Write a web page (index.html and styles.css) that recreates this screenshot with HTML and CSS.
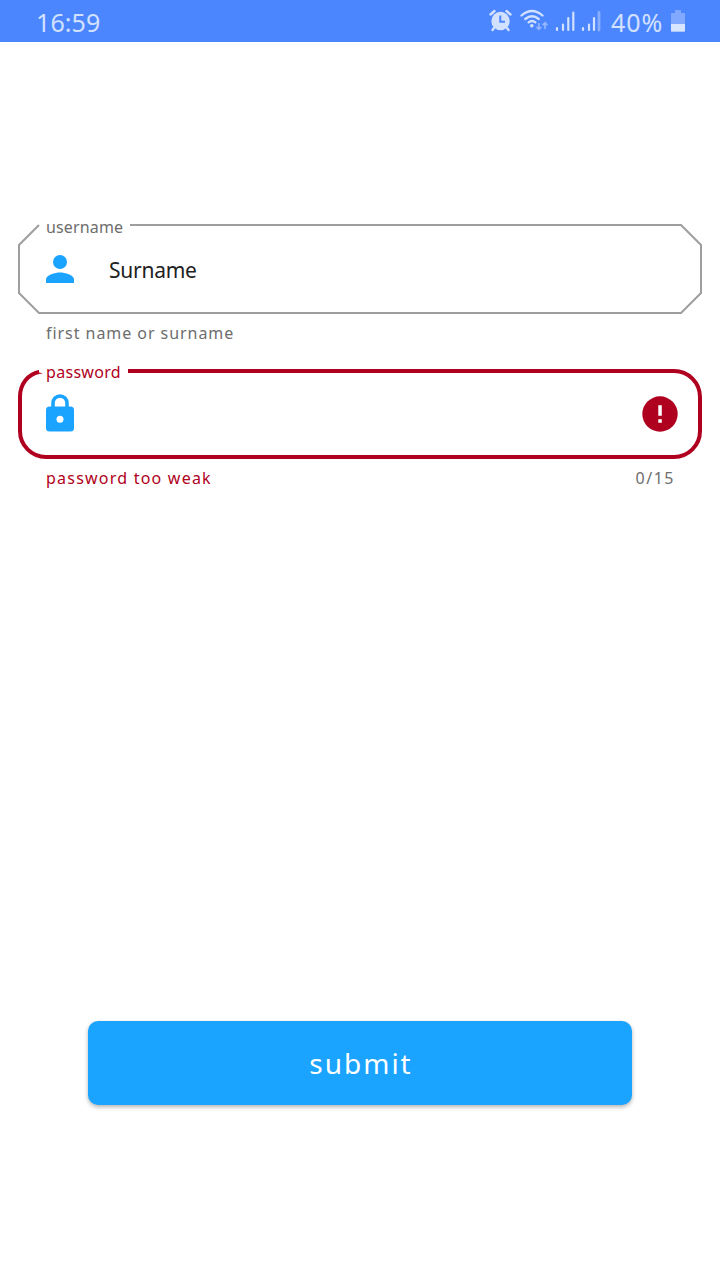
FILE: index.html
```html
<!DOCTYPE html>
<html lang="en">
<head>
<meta charset="utf-8">
<meta name="viewport" content="width=device-width">
<title>Login</title>
<link rel="stylesheet" href="styles.css">
</head>
<body>
<header class="status">
  <span class="clock">16:59</span>
  <div class="tray">
    <svg class="tray-icons" width="116" height="26" viewBox="488 8 116 26">
      <g fill="none" stroke="#d2e1ff" stroke-linecap="round">
        <path d="M490.5 14.5l4-3.5M510.5 14.5l-4-3.5" stroke-width="2.4"/>
        <path d="M494 28l-1.5 2M507 28l1.5 2" stroke-width="2.4"/>
        <path d="M521.5 15.5q10.5-9 21 0M525.3 19q6.7-5.5 13.4 0M528.6 22.3q3.4-2.6 6.8 0" stroke-width="2.3"/>
        <path d="M557 28v2M563 24.5v5.5M568.3 18v12M573.3 12.5v17.5M583 28v2M589 24.5v5.5M594 18v12" stroke-width="2.2"/>
        <path d="M599 12.5v17.5" stroke-width="2.8" opacity=".45"/>
      </g>
      <circle cx="500.5" cy="21" r="9.2" fill="#d2e1ff"/>
      <path d="M500.3 15.5v6.3h4.7" fill="none" stroke="#4c86ff" stroke-width="2"/>
      <circle cx="531.8" cy="25.8" r="1.8" fill="#d2e1ff"/>
      <path d="M538.8 23v6.2m-2.4-2.2 2.4 2.4 2.4-2.4M545 29v-6m-2.4 2.1 2.4-2.4 2.4 2.4" fill="none" stroke="#92b6ff" stroke-width="1.7"/>
    </svg>
    <span class="percent">40%</span>
    <svg class="battery" width="14" height="22" viewBox="0 0 14 22">
      <path d="M4 0h6v3h4v19H0V3h4z" fill="#81a9ff"/>
      <path d="M0 14h14v6.5q0 1-1 1H1q-1 0-1-1z" fill="#d8e5ff"/>
    </svg>
  </div>
</header>
<main class="form">
  <div class="field">
    <svg class="outline" width="684" height="90" viewBox="0 0 684 90">
      <path d="M112 1H663L683 21V69L663 89H21L1 69V21L21 1" fill="none" stroke="#9e9e9e" stroke-width="2"/>
    </svg>
    <div class="label username">username</div>
    <svg class="lead" width="28" height="28" viewBox="0 0 28 28" fill="#1aa3ff">
      <circle cx="14" cy="7" r="7"/><path d="M0 28v-3.5C0 19.8 9.3 17.5 14 17.5s14 2.3 14 7V28z"/>
    </svg>
    <span class="value">Surname</span>
  </div>
  <div class="helper"><span class="hint">first name or surname</span></div>
  <div class="field">
    <svg class="outline" width="684" height="90" viewBox="0 0 684 90">
      <path d="M110 2H656A26 26 0 0 1 682 28V62A26 26 0 0 1 656 88H28A26 26 0 0 1 2 62V28C2 15 10 5 22 2.8" fill="none" stroke="#b00020" stroke-width="4"/>
      <path d="M21 0h10v8H21z" fill="#fff"/><path d="M21 3.4l4 .9-4 .7z" fill="#b00020"/>
    </svg>
    <div class="label password">password</div>
    <svg class="lead lock" width="28" height="38" viewBox="0 0 28 38">
      <path d="M7 14V9a7 7 0 0 1 14 0v5" fill="none" stroke="#1aa3ff" stroke-width="3.5"/>
      <rect y="12.5" width="28" height="25" rx="3.5" fill="#1aa3ff"/><circle cx="14" cy="25.2" r="3.5" fill="#fff"/>
    </svg>
    <svg class="alert" width="36" height="36" viewBox="0 0 36 36">
      <circle cx="18" cy="18" r="17.7" fill="#b00020"/><path d="M16.3 9.2h3.5v10.6h-3.5zM16.3 23.2h3.5v3.6h-3.5z" fill="#fff"/>
    </svg>
  </div>
  <div class="helper"><span class="hint error">password too weak</span><span class="counter">0/15</span></div>
</main>
<footer class="actions"><button class="submit" type="button">submit</button></footer>
</body>
</html>
```

FILE: styles.css
```css
* { box-sizing: border-box; }
body {
  margin: 0;
  height: 1280px;
  display: flex;
  flex-direction: column;
  background: #fff;
  font-family: "Noto Sans", "Open Sans", sans-serif;
  color: #212121;
}
svg { display: block; flex: none; }
.status {
  height: 42px;
  padding: 0 35px 0 36px;
  display: flex;
  align-items: center;
  justify-content: space-between;
  background: #4c86ff;
  color: #d2e1ff;
  font-size: 25px;
  line-height: 40px;
}
.clock { padding-top: 2px; letter-spacing: .1px; }
.tray { display: flex; align-items: center; }
.percent { width: 53px; margin-left: 7px; padding-top: 2px; letter-spacing: .9px; }
.battery { margin-left: 7px; }
.form { padding: 182px 18px 0; }
.field {
  position: relative;
  height: 90px;
  padding: 0 24px 0 28px;
  display: flex;
  align-items: center;
}
.outline { position: absolute; left: 0; top: 0; }
.label {
  position: absolute;
  left: 28px;
  top: -9px;
  font-size: 16px;
  line-height: 25px;
  white-space: nowrap;
}
.username { color: #6d6d6d; letter-spacing: .15px; }
.password { color: #b00020; letter-spacing: .3px; }
.lead { position: relative; }
.lock { margin-bottom: 2px; }
.value { margin: 2px 0 0 35px; font-size: 21px; letter-spacing: -.25px; }
.alert { margin-left: auto; position: relative; }
.helper {
  height: 55px;
  padding: 7px 27px 0 28px;
  display: flex;
  justify-content: space-between;
  font-size: 16px;
  line-height: 24px;
  color: #6d6d6d;
}
.hint { letter-spacing: .95px; }
.error { color: #b00020; letter-spacing: 1.22px; }
.counter { letter-spacing: 1.5px; }
.actions { margin-top: auto; padding: 0 88px 175px; }
.submit {
  display: block;
  width: 100%;
  height: 84px;
  padding: 0 0 0 2px;
  border: 0;
  border-radius: 10px;
  background: #1aa3ff;
  box-shadow: 0 2px 4px rgba(0, 0, 0, .3);
  color: #fff;
  font: 28px "Noto Sans", sans-serif;
  letter-spacing: 2px;
}
```
